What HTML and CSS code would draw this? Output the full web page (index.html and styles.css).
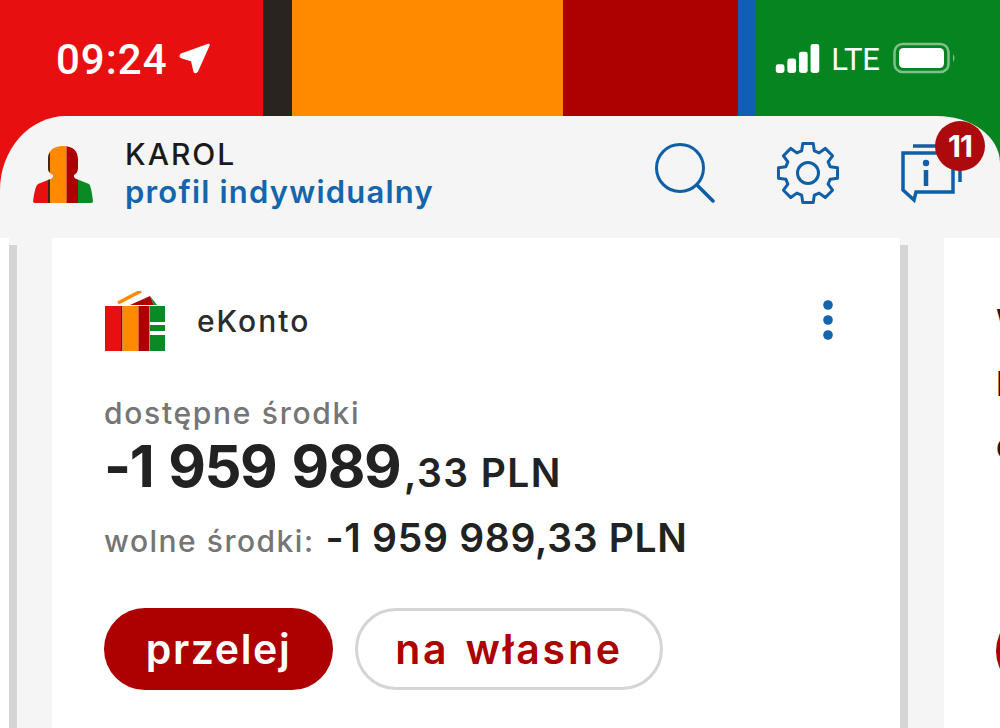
FILE: index.html
```html
<!DOCTYPE html>
<html lang="pl">
<head>
<meta charset="utf-8">
<title>eKonto</title>
<link rel="stylesheet" href="styles.css">
</head>
<body>
<div class="app">
  <header class="top">
    <div class="status">
      <div class="status-left">
        <span class="clock">09:24</span>
        <svg class="arrow" viewBox="0 0 32 32"><path d="M30 2 L18 29 Q16.500 31 15.500 29 L13 18 L2 14.500 Q0.500 13.500 2 12 Z" fill="#fff" stroke="#fff" stroke-width="2.500" stroke-linejoin="round"/></svg>
      </div>
      <div class="status-right">
        <svg class="signal" viewBox="0 0 46 30"><rect x="0" y="21" width="9" height="9" rx="2.500"/><rect x="12" y="15" width="9" height="15" rx="2.500"/><rect x="24" y="8" width="9" height="22" rx="2.500"/><rect x="36" y="0" width="9" height="30" rx="2.500"/></svg>
        <span class="lte">LTE</span>
        <svg class="battery" viewBox="0 0 64 32"><rect x="1.500" y="2" width="54" height="28" rx="8" fill="none" stroke="#7fc08d" stroke-width="2.500"/><rect x="6" y="6" width="45" height="20" rx="4.500" fill="#fff"/><path d="M60 12 Q63 16 60 20 Z" fill="#7fc08d"/></svg>
      </div>
    </div>
    <div class="panel">
      <svg class="avatar" viewBox="0 0 60 57">
        <defs><clipPath id="person"><path d="M15 14 Q15 0 30 0 Q45 0 45 14 V22 Q45 27 41 29 V31 Q42 33 46 34 L56 38 Q58 39 60 55 Q60 57 58 57 H2 Q0 57 0 55 Q2 40 5 38 L15 34 Q19 33 20 31 V29 Q15 27 15 22 Z"/></clipPath></defs>
        <g clip-path="url(#person)">
          <rect x="0" y="0" width="16" height="57" fill="#e80f10"/>
          <rect x="15" y="0" width="2" height="57" fill="#3a2a1c"/>
          <rect x="17" y="0" width="16.500" height="57" fill="#ff8a00"/>
          <rect x="33.500" y="0" width="11.500" height="57" fill="#ad0000"/>
          <rect x="45" y="0" width="15" height="57" fill="#0a8a24"/>
        </g>
      </svg>
      <div class="who">
        <div class="name">KAROL</div>
        <div class="profile">profil indywidualny</div>
      </div>
      <div class="actions">
        <svg class="ic-search" viewBox="0 0 60 60"><circle cx="25" cy="25" r="23.500" fill="none" stroke="#0f5fa8" stroke-width="3"/><path d="M42 42 L58 58" stroke="#0f5fa8" stroke-width="3.500" stroke-linecap="round"/></svg>
        <svg class="ic-gear" viewBox="-32 -32 64 64"><polygon fill="none" stroke="#0f5fa8" stroke-width="3" stroke-linejoin="round" points="-6.34,-22.11 -5.21,-29.54 5.21,-29.54 6.34,-22.11 11.15,-20.12 17.21,-24.57 24.57,-17.21 20.12,-11.15 22.11,-6.34 29.54,-5.21 29.54,5.21 22.11,6.34 20.12,11.15 24.57,17.21 17.21,24.57 11.15,20.12 6.34,22.11 5.21,29.54 -5.21,29.54 -6.34,22.11 -11.15,20.12 -17.21,24.57 -24.57,17.21 -20.12,11.15 -22.11,6.34 -29.54,5.21 -29.54,-5.21 -22.11,-6.34 -20.12,-11.15 -24.57,-17.21 -17.21,-24.57 -11.15,-20.12"/><circle cx="0" cy="0" r="10.500" fill="none" stroke="#0f5fa8" stroke-width="3"/></svg>
        <div class="info">
          <svg class="ic-info" viewBox="0 0 62 62"><path d="M13 3 H50 M60 20 V39" fill="none" stroke="#0f5fa8" stroke-width="3.500"/><path d="M3 10 H53 V49 H16 L14 57 L3 47 Z" fill="none" stroke="#0f5fa8" stroke-width="3.500" stroke-linejoin="miter"/><circle cx="26" cy="20" r="3.200" fill="#0f5fa8"/><path d="M26 27 V43" stroke="#0f5fa8" stroke-width="4.500"/></svg>
          <span class="badge">11</span>
        </div>
      </div>
    </div>
  </header>
  <main class="carousel">
    <div class="edge-white"></div>
    <div class="bar"></div>
    <section class="card">
      <div class="card-head">
        <svg class="logo" viewBox="0 0 62 62">
          <path d="M14 12 L37 0" stroke="#ff8a00" stroke-width="3.500"/>
          <path d="M26 14 L46 5 L50 14 Z" fill="#ad0000"/>
          <path d="M46 5 L50 14 H53 Z" fill="#0a8a24"/>
          <rect x="1" y="15" width="16" height="45" fill="#e80f10"/>
          <rect x="17" y="15" width="1.500" height="45" fill="#3a2a1c"/>
          <rect x="18.500" y="15" width="16" height="45" fill="#ff8a00"/>
          <rect x="34.500" y="15" width="11" height="45" fill="#ad0000"/>
          <rect x="46" y="15" width="15" height="16" fill="#0a8a24"/>
          <rect x="46" y="34" width="15" height="6" fill="#0a8a24"/>
          <rect x="46" y="44" width="15" height="16" fill="#0a8a24"/>
        </svg>
        <span class="account">eKonto</span>
        <svg class="dots" viewBox="0 0 10 40"><circle cx="5" cy="5" r="4.800"/><circle cx="5" cy="20" r="4.800"/><circle cx="5" cy="35" r="4.800"/></svg>
      </div>
      <div class="label">dostępne środki</div>
      <div class="amount"><span class="big">-1 959 989</span><span class="small">,33 PLN</span></div>
      <div class="free"><span class="free-label">wolne środki:</span><span class="free-value">-1 959 989,33 PLN</span></div>
      <div class="buttons">
        <button class="btn primary">przelej</button>
        <button class="btn outline">na własne</button>
      </div>
    </section>
    <div class="bar"></div>
    <section class="card next">
      <div class="next-text">W</div>
      <div class="next-text">P</div>
      <div class="next-text">d</div>
      <div class="next-btn"></div>
    </section>
  </main>
</div>
</body>
</html>
```
FILE: styles.css
```css
* { box-sizing: border-box; }
html, body { margin: 0; padding: 0; width: 1000px; height: 728px; overflow: hidden; background: #fff; }
body { font-family: Inter, "Open Sans", sans-serif; }
.app { display: flex; flex-direction: column; height: 728px; }

.top { flex: none; background: linear-gradient(90deg, #e80f10 0 263px, #2a2420 263px 292px, #ff8a00 292px 563px, #ad0000 563px 738px, #0f5fb5 738px 756px, #068420 756px); }
.status { height: 116px; display: flex; justify-content: space-between; color: #fff; }
.status-left { display: flex; align-items: center; padding: 2px 0 0 56px; gap: 11px; height: 116px; }
.clock { font-family: Roboto, sans-serif; font-weight: 500; font-size: 42px; letter-spacing: 1px; }
.arrow { width: 32px; height: 31px; margin-top: -2px; }
.status-right { display: flex; align-items: center; padding-right: 43px; height: 116px; gap: 10px; }
.signal { width: 46px; height: 29px; fill: #fff; }
.lte { font-family: "Liberation Sans Narrow", Roboto, sans-serif; font-size: 31px; line-height: 1; margin-top: 3px; }
.battery { width: 64px; height: 32px; margin-left: 3px; }

.panel { height: 122px; background: #f5f5f6; border-radius: 66px 63px 0 0 / 74px 47px 0 0; display: flex; align-items: center; padding-left: 33px; }
.avatar { width: 60px; height: 57px; flex: none; margin-top: -6px; }
.who { margin-left: 32px; margin-top: -8px; }
.name { font-size: 30px; line-height: 38px; font-weight: 500; color: #1a1a1a; letter-spacing: 2px; }
.profile { font-size: 31px; line-height: 38px; font-weight: 600; color: #1565ad; letter-spacing: 1.200px; }
.actions { margin-left: auto; display: flex; align-items: flex-start; align-self: flex-start; padding: 27px 0 0; }
.ic-search { width: 60px; height: 60px; flex: none; display: block; margin-right: 61px; }
.ic-gear { width: 64px; height: 64px; flex: none; display: block; margin-right: 60px; margin-top: -2px; }
.info { position: relative; width: 100px; height: 60px; }
.ic-info { width: 62px; height: 62px; display: block; }
.badge { position: absolute; left: 35px; top: -22px; width: 50px; height: 50px; border-radius: 50%; background: #ad0a0e; color: #fff; font-weight: 700; font-size: 30px; display: flex; align-items: center; justify-content: center; letter-spacing: -1px; }

.carousel { flex: 1; display: flex; background: #f5f5f5; overflow: hidden; min-height: 0; }
.edge-white { flex: none; width: 9px; background: #fff; }
.bar { flex: none; width: 8px; margin-top: 7px; background: #d5d5d5; }
.card { flex: none; width: 848px; background: #fff; margin: 0 0 0 35px; padding: 53px 0 0 52px; }
.card-head { display: flex; align-items: center; height: 62px; }
.logo { width: 62px; height: 62px; flex: none; }
.account { font-size: 30px; font-weight: 500; color: #2c2c2c; margin-left: 31px; letter-spacing: 2px; margin-top: -2px; }
.dots { width: 10px; height: 40px; fill: #1565ad; margin-left: auto; margin-right: 67px; margin-top: -4px; }
.label { margin-top: 42px; font-size: 30px; line-height: 36px; font-weight: 500; color: #757575; letter-spacing: 1.700px; }
.amount { margin-top: -2px; line-height: 74px; color: #222; white-space: nowrap; }
.big { font-size: 58px; font-weight: 700; letter-spacing: -1.500px; word-spacing: 3px; }
.small { font-size: 39px; font-weight: 600; letter-spacing: 1.400px; margin-left: 4px; }
.free { margin-top: -3px; display: flex; align-items: baseline; gap: 11px; white-space: nowrap; line-height: 45px; }
.free-label { font-size: 30px; font-weight: 500; color: #757575; letter-spacing: 1.500px; }
.free-value { font-size: 39px; font-weight: 600; color: #222; letter-spacing: 0.700px; }
.buttons { display: flex; gap: 22px; margin-top: 44px; }
.btn { height: 82px; border-radius: 41px; font-family: inherit; font-size: 41px; font-weight: 600; padding: 0; }
.primary { width: 229px; background: #ad0000; color: #fff; border: 0; letter-spacing: 1.600px; }
.outline { width: 308px; background: #fff; color: #ad0000; border: 3px solid #d5d5d5; letter-spacing: 2.800px; word-spacing: 3px; }
.next { width: 200px; margin-left: 36px; padding: 53px 0 0 52px; font-size: 34px; font-weight: 600; color: #1a1a1a; }
.next-text { line-height: 62px; }
.next-btn { width: 82px; height: 82px; border-radius: 50%; background: #ad0000; margin-top: 133px; }
```
